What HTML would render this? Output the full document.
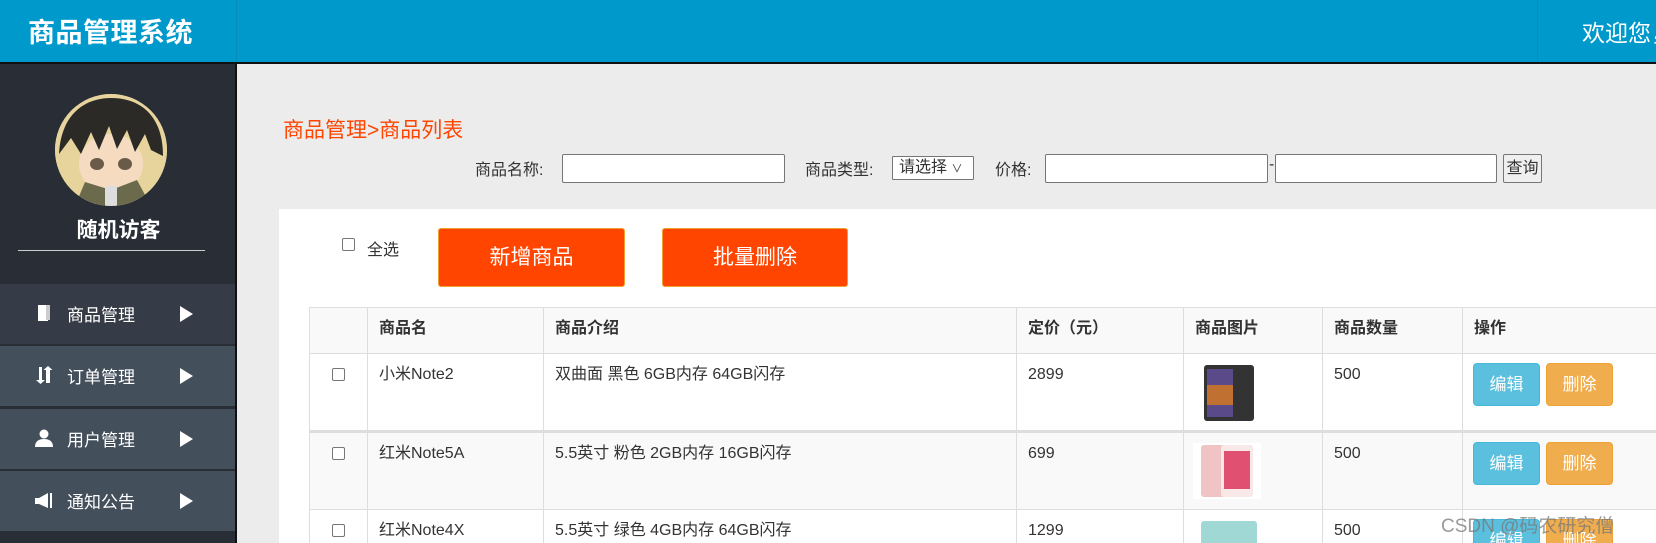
<!DOCTYPE html>
<html><head><meta charset="utf-8"><style>
*{margin:0;padding:0;box-sizing:border-box}
html,body{width:1656px;height:543px;overflow:hidden}
body{background:#ececec;font-family:"Liberation Sans","Noto Sans CJK SC",sans-serif;color:#333;position:relative}
.hdr{position:absolute;left:0;top:0;width:1656px;height:64px;background:#0099cb;border-bottom:2px solid #111}
.hdr .logo{position:absolute;left:28px;top:11px;font-size:27px;font-weight:bold;color:#fff;letter-spacing:0.5px}
.hdr .sep{position:absolute;top:0;width:1px;height:62px;background:#0a8ab6}
.hdr .wel{position:absolute;left:1582px;top:14px;font-size:23px;color:#fff;white-space:nowrap}
.side{position:absolute;left:0;top:64px;width:237px;height:479px;background:#282d36;border-right:2px solid #111}
.av{position:absolute;left:55px;width:112px;height:112px;border-radius:50%;overflow:hidden;background:#d8c89a}
.name{position:absolute;left:0;width:237px;text-align:center;font-size:21px;font-weight:bold;color:#fff}
.line{position:absolute;left:18px;width:187px;height:1px;background:#ccc}
.mi{position:absolute;left:0;width:235px;height:60px;background:#444f5c;color:#fff;font-size:17px}
.mi .ic{position:absolute;left:34px;top:19px;width:20px;height:20px}
.mi .t{position:absolute;left:67px;top:17px}
.mi .tri{position:absolute;left:180px;top:22px;width:0;height:0;border-left:13px solid #fff;border-top:8px solid transparent;border-bottom:8px solid transparent}
.bc{position:absolute;left:283px;top:114px;font-size:21px;color:#ff4500}
.sr{position:absolute;font-size:16px;color:#333}
.inp{position:absolute;top:154px;height:29px;background:#fff;border:1px solid #767676;border-radius:2px}
.panel{position:absolute;left:279px;top:209px;width:1377px;height:334px;background:#fff}
.ob{position:absolute;top:228px;height:59px;background:#ff4500;border:1px solid #f0a030;border-radius:3px;color:#fff;font-size:21px;text-align:center;line-height:57px}
.cb{position:absolute;width:13px;height:13px;border:1px solid #767676;border-radius:2px;background:#fff}
.clip{position:absolute;left:0;top:0;width:1656px;height:543px;overflow:hidden}
table{position:absolute;left:309px;top:307px;width:1357px;border-collapse:collapse;font-size:16px;table-layout:fixed}
td,th{border:1px solid #ddd;text-align:left;vertical-align:top;padding:10px 11px;line-height:22px;position:relative}
th{font-weight:bold;height:46px;background:#f9f9f9}
tr.r td{height:78px}
tr.s td{background:#f9f9f9}
tr.thick td{border-bottom:3px solid #ddd}
.bt{display:inline-block;width:67px;height:43px;border-radius:4px;color:#fff;font-size:17px;text-align:center;line-height:41px;position:absolute;top:9px}
.bi{background:#5bc0de;border:1px solid #46b8da;left:10px}
.bw{background:#f0ad4e;border:1px solid #eea236;left:83px}
.wm{position:absolute;left:1441px;top:511px;font-size:19px;color:rgba(120,120,120,.75);white-space:nowrap}
</style></head><body>
<div class="hdr"><div class="logo">商品管理系统</div><div class="sep" style="left:236px"></div><div class="sep" style="left:1537px"></div><div class="wel">欢迎您，</div></div>
<div class="side">
<div class="av" style="top:30px">
<svg width="112" height="112" viewBox="0 0 112 112"><rect width="112" height="112" fill="#e7d49c"/><ellipse cx="56" cy="70" rx="32" ry="30" fill="#f5dcc0"/><path d="M4 60 C6 20 30 4 56 4 C86 4 108 22 108 62 L96 56 L90 40 L80 58 L72 36 L62 55 L54 32 L44 56 L36 38 L26 60 L16 44 Z" fill="#2b2a26"/><ellipse cx="42" cy="70" rx="7" ry="6" fill="#6a5a48"/><ellipse cx="70" cy="70" rx="7" ry="6" fill="#6a5a48"/><path d="M20 112 L30 88 L56 96 L82 86 L96 112 Z" fill="#6c6a4c"/><rect x="50" y="92" width="12" height="20" fill="#ddd"/></svg>
</div>
<div class="name" style="top:150px">随机访客</div>
<div class="line" style="top:186px"></div>
<div class="mi" style="top:220px;background:#363c47"><svg class="ic" viewBox="0 0 20 20"><path d="M4 2h10v16H4z" fill="#fff"/><path d="M12 2h4v15h-4z" fill="#ccc"/></svg><span class="t">商品管理</span><span class="tri"></span></div>
<div class="mi" style="top:282px"><svg class="ic" viewBox="0 0 20 20"><path d="M5 2v13H2l4.5 4 4.5-4H8V2zM12 18V5H9.5L14 1l4.5 4H16v13z" fill="#fff"/></svg><span class="t">订单管理</span><span class="tri"></span></div>
<div class="mi" style="top:345px"><svg class="ic" viewBox="0 0 20 20"><circle cx="10" cy="6" r="4.5" fill="#fff"/><path d="M1 19c0-6 4-8 9-8s9 2 9 8z" fill="#fff"/></svg><span class="t">用户管理</span><span class="tri"></span></div>
<div class="mi" style="top:407px"><svg class="ic" viewBox="0 0 20 20"><path d="M1 8h4l9-5v15l-9-4H1z" fill="#fff"/><rect x="16" y="3" width="2" height="15" fill="#fff"/></svg><span class="t">通知公告</span><span class="tri"></span></div>
</div>
<div class="bc">商品管理&gt;商品列表</div>
<div class="sr" style="left:475px;top:156px">商品名称:</div>
<div class="inp" style="left:562px;width:223px"></div>
<div class="sr" style="left:805px;top:156px">商品类型:</div>
<div class="inp" style="left:892px;top:156px;width:82px;height:24px;border-radius:1px;font-size:16px;line-height:22px;padding-left:6px">请选择 <span style="font-size:11px">&#x2228;</span></div>
<div class="sr" style="left:995px;top:156px">价格:</div>
<div class="inp" style="left:1045px;width:223px"></div>
<div class="sr" style="left:1269px;top:156px">-</div>
<div class="inp" style="left:1275px;width:222px"></div>
<div class="inp" style="left:1503px;width:39px;background:#efefef;font-size:16px;line-height:27px;text-align:center;padding:0">查询</div>
<div class="panel"></div>
<div class="cb" style="left:342px;top:238px"></div>
<div class="sr" style="left:367px;top:236px">全选</div>
<div class="ob" style="left:438px;width:187px">新增商品</div>
<div class="ob" style="left:662px;width:186px">批量删除</div>
<div class="clip">
<table>
<colgroup><col style="width:58px"><col style="width:176px"><col style="width:473px"><col style="width:167px"><col style="width:139px"><col style="width:140px"><col style="width:204px"></colgroup>
<tr><th></th><th>商品名</th><th>商品介绍</th><th>定价（元）</th><th>商品图片</th><th>商品数量</th><th>操作</th></tr>
<tr class="r thick"><td><div class="cb" style="left:22px;top:14px"></div></td><td>小米Note2</td><td>双曲面 黑色 6GB内存 64GB闪存</td><td>2899</td><td><svg width="56" height="56" style="position:absolute;left:17px;top:11px"><rect x="3" y="0" width="50" height="56" rx="3" fill="#333"/><rect x="6" y="4" width="26" height="48" fill="#5a4a8a"/><rect x="6" y="20" width="26" height="20" fill="#c07030"/></svg></td><td>500</td><td><span class="bt bi">编辑</span><span class="bt bw">删除</span></td></tr>
<tr class="r s"><td><div class="cb" style="left:22px;top:14px"></div></td><td>红米Note5A</td><td>5.5英寸 粉色 2GB内存 16GB闪存</td><td>699</td><td><svg width="68" height="56" style="position:absolute;left:9px;top:10px"><rect width="68" height="56" fill="#fff"/><rect x="8" y="2" width="26" height="52" rx="3" fill="#f0c4c4"/><rect x="28" y="2" width="32" height="52" rx="3" fill="#f8e8e8"/><rect x="31" y="8" width="26" height="38" fill="#e05070"/></svg></td><td>500</td><td><span class="bt bi">编辑</span><span class="bt bw">删除</span></td></tr>
<tr class="r"><td><div class="cb" style="left:22px;top:14px"></div></td><td>红米Note4X</td><td>5.5英寸 绿色 4GB内存 64GB闪存</td><td>1299</td><td><svg width="56" height="56" style="position:absolute;left:17px;top:11px"><rect width="56" height="56" rx="3" fill="#9fd8d4"/></svg></td><td>500</td><td><span class="bt bi">编辑</span><span class="bt bw">删除</span></td></tr>
</table>
</div>
<div class="wm">CSDN @码农研究僧</div>
</body></html>
